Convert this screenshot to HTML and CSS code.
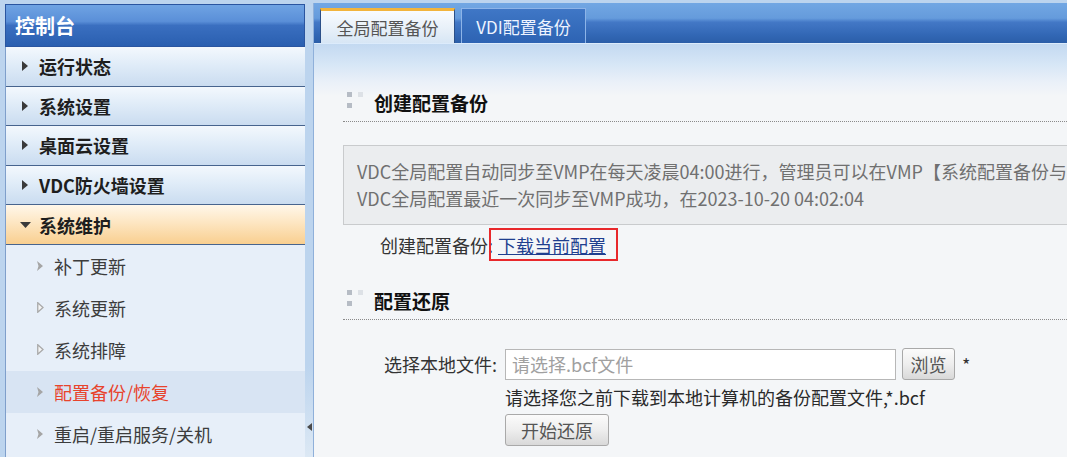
FILE: index.html
```html
<!DOCTYPE html>
<html lang="zh-CN">
<head>
<meta charset="utf-8">
<title>配置备份/恢复</title>
<link rel="stylesheet" href="styles.css">
</head>
<body>
<div class="app">
  <aside class="sidebar">
    <div class="side-title">控制台</div>
    <div class="menu-item"><span class="ico"><svg width="6" height="10" viewBox="0 0 6 10"><path d="M0 0 L6 5 L0 10 Z" fill="#3a3a3a"/></svg></span><span>运行状态</span></div>
    <div class="menu-item"><span class="ico"><svg width="6" height="10" viewBox="0 0 6 10"><path d="M0 0 L6 5 L0 10 Z" fill="#3a3a3a"/></svg></span><span>系统设置</span></div>
    <div class="menu-item"><span class="ico"><svg width="6" height="10" viewBox="0 0 6 10"><path d="M0 0 L6 5 L0 10 Z" fill="#3a3a3a"/></svg></span><span>桌面云设置</span></div>
    <div class="menu-item"><span class="ico"><svg width="6" height="10" viewBox="0 0 6 10"><path d="M0 0 L6 5 L0 10 Z" fill="#3a3a3a"/></svg></span><span>VDC防火墙设置</span></div>
    <div class="menu-item active"><span class="ico"><svg width="11" height="6" viewBox="0 0 11 6"><path d="M0 0 L11 0 L5.5 6 Z" fill="#3a3a3a"/></svg></span><span>系统维护</span></div>
    <ul class="submenu">
      <li><span class="ico"><svg width="6" height="10" viewBox="0 0 6 10"><path d="M0 0 L6 5 L0 10 L1.5 5 Z" fill="#a5a5a5"/></svg></span><span>补丁更新</span></li>
      <li><span class="ico"><svg width="7" height="11" viewBox="0 0 7 11"><path d="M0.75 0.75 L6 5.5 L0.75 10.25 Z" fill="#f4f4f4" stroke="#a9a9a9" stroke-width="1.3"/></svg></span><span>系统更新</span></li>
      <li><span class="ico"><svg width="7" height="11" viewBox="0 0 7 11"><path d="M0.75 0.75 L6 5.5 L0.75 10.25 Z" fill="#f4f4f4" stroke="#a9a9a9" stroke-width="1.3"/></svg></span><span>系统排障</span></li>
      <li class="current"><span class="ico"><svg width="6" height="10" viewBox="0 0 6 10"><path d="M0 0 L6 5 L0 10 L1.5 5 Z" fill="#a5a5a5"/></svg></span><span>配置备份/恢复</span></li>
      <li><span class="ico"><svg width="6" height="10" viewBox="0 0 6 10"><path d="M0 0 L6 5 L0 10 L1.5 5 Z" fill="#a5a5a5"/></svg></span><span>重启/重启服务/关机</span></li>
    </ul>
  </aside>
  <div class="splitter"><svg class="split-arrow" width="5" height="8" viewBox="0 0 5 8"><path d="M5 0 L0 4 L5 8 Z" fill="#4a4a4a"/></svg></div>
  <main class="content">
    <div class="tabbar">
      <div class="tab active">全局配置备份</div>
      <div class="tab">VDI配置备份</div>
    </div>
    <div class="panel">
      <div class="section-head first">
        <span class="dots"><i class="d1"></i><i class="d2"></i><i class="d1"></i><i class="d4"></i></span>
        <h2>创建配置备份</h2>
      </div>
      <div class="notice">
        <p>VDC全局配置自动同步至VMP在每天凌晨04:00进行，管理员可以在VMP【系统配置备份与恢复】中恢复</p>
        <p>VDC全局配置最近一次同步至VMP成功，在2023-10-20 04:02:04</p>
      </div>
      <div class="backup-row">
        <span class="label">创建配置备份:</span><span class="highlight"><a href="#" class="link">下载当前配置</a></span>
      </div>
      <div class="section-head">
        <span class="dots"><i class="d1"></i><i class="d2"></i><i class="d1"></i><i class="d4"></i></span>
        <h2>配置还原</h2>
      </div>
      <div class="form-row">
        <span class="form-label">选择本地文件:</span>
        <input class="file-input" type="text" placeholder="请选择.bcf文件">
        <button class="btn browse">浏览</button>
        <span class="star">*</span>
      </div>
      <div class="hint">请选择您之前下载到本地计算机的备份配置文件,*.bcf</div>
      <button class="btn restore">开始还原</button>
    </div>
  </main>
</div>
</body>
</html>
```
FILE: styles.css
```css
* { box-sizing: border-box; }
html, body { margin: 0; padding: 0; }
body {
  background: #bcd4ee;
  font-family: "Noto Sans CJK SC", "Noto Sans", sans-serif;
  width: 1067px;
  height: 457px;
  overflow: hidden;
}
.app {
  display: flex;
  height: 457px;
  padding-top: 3px;
}
.sidebar {
  width: 300px;
  margin-left: 5px;
  margin-top: 1px;
  background: #e6eef9;
  border-left: 1px solid #7f9fcb;
  display: flex;
  flex-direction: column;
}
.side-title {
  height: 43px;
  border: 1px solid #2a55a0;
  margin-left: -1px;
  background: linear-gradient(#6fa3e3 0%, #5a8fd8 40%, #3a6fc0 50%, #2a5fb0 100%);
  color: #fff;
  font-size: 20px;
  font-weight: bold;
  padding-left: 9px;
  display: flex;
  align-items: center;
}
.menu-item {
  height: 39.6px;
  border-bottom: 1px solid #47648e;
  background: linear-gradient(#f3f8fd 0%, #e0ecf8 45%, #cadcf0 100%);
  display: flex;
  align-items: center;
  padding-left: 11px;
  font-size: 18px;
  font-weight: bold;
  color: #1e1e1e;
}
.menu-item.active {
  background: linear-gradient(#fff7ea 0%, #fde6c2 45%, #f9cf90 100%);
}
.ico {
  width: 16px;
  display: flex;
  justify-content: center;
  align-items: center;
  margin-right: 6px;
}
.submenu {
  list-style: none;
  margin: 0;
  padding: 0;
  background: #e7eff9;
  flex: 1;
}
.submenu li {
  height: 42px;
  display: flex;
  align-items: center;
  padding-left: 26px;
  font-size: 18px;
  color: #3c3c3c;
}
.submenu li.current {
  background: #d8e4f3;
  color: #e8432c;
}
.splitter {
  width: 8px;
  background: linear-gradient(#bcd4ee 0%, #bcd4ee 80%, #dce8f4 100%);
  display: flex;
  flex-direction: column;
  justify-content: flex-end;
  align-items: center;
  padding-bottom: 26px;
}
.content {
  flex: 1;
  min-width: 0;
  border-left: 1px solid #8fb0da;
  overflow: hidden;
  display: flex;
  flex-direction: column;
}
.tabbar {
  height: 41px;
  flex: none;
  background: linear-gradient(#72a7e3 0%, #659bdc 38%, #4378c6 48%, #3267b5 80%, #2b5ea8 100%);
  border-bottom: 1px solid #dcebfb;
  padding-left: 6px;
  display: flex;
  align-items: flex-end;
  gap: 6px;
}
.tab {
  height: 35px;
  display: flex;
  align-items: center;
  justify-content: center;
  font-size: 17px;
}
.tab.active {
  width: 135px;
  border: 1px solid #2b4f88;
  border-top: 3px solid #f2b43c;
  border-bottom: none;
  background: linear-gradient(#f8fbfe 0%, #e6eff8 60%, #d7e6f5 100%);
  color: #555;
}
.tab:not(.active) {
  width: 125px;
  border: 1px solid #8db4e8;
  border-bottom: none;
  background: linear-gradient(#3f77c6, #2d63b3);
  color: #eef4ff;
}
.panel {
  flex: 1;
  background: linear-gradient(#c3d9f1 0px, #d6e6f6 20px, #eaf0f8 38px, #f4f6f8 52px, #f4f6f8 100%);
  padding-left: 29px;
}
.section-head {
  height: 38px;
  display: flex;
  align-items: center;
  padding-left: 4px;
  border-bottom: 1px dotted #8a8a8a;
  margin-top: 21px;
}
.section-head.first { margin-top: 40px; }
.dots {
  display: grid;
  grid-template-columns: 5px 5px;
  grid-template-rows: 5px 5px;
  gap: 6px;
  margin-top: -6px;
  margin-right: 11px;
}
.dots i { display: block; }
.dots .d1 { background: #b6bcc5; }
.dots .d2 { background: #dde1e6; }
.dots .d4 { background: transparent; }
.section-head h2 {
  margin: 0;
  font-size: 19px;
  font-weight: bold;
  color: #111;
}
.notice {
  margin-top: 23px;
  height: 80px;
  background: #ebedef;
  border: 1px solid #c9cbcd;
  border-right: none;
  padding: 12px 0 0 13px;
  font-size: 18px;
  line-height: 27px;
  color: #707070;
  white-space: nowrap;
}
.notice p { margin: 0; }
.backup-row {
  margin-top: 3px;
  height: 33px;
  display: flex;
  align-items: center;
  padding-left: 37px;
  font-size: 18px;
  color: #333;
}
.highlight {
  height: 33px;
  border: 2px solid #e8282b;
  display: flex;
  align-items: center;
  padding: 0 10px 0 7px;
  margin-left: -4px;
}
.link {
  color: #1f3f8f;
  text-decoration: underline;
}
.form-row {
  margin-top: 28px;
  display: flex;
  align-items: center;
  height: 32px;
  font-size: 18px;
  color: #333;
}
.form-label {
  width: 162px;
  text-align: right;
  padding-right: 8px;
}
.file-input {
  width: 391px;
  height: 31px;
  border: 1px solid #b7b7b7;
  background: #fff;
  font-family: inherit;
  font-size: 18px;
  padding: 0 6px;
  outline: none;
}
.file-input::placeholder { color: #a0a0a0; }
.btn {
  height: 32px;
  border: 1px solid #a9a9a9;
  border-radius: 3px;
  background: linear-gradient(#fbfbfb 0%, #eeeeee 50%, #d9d9d9 100%);
  font-family: inherit;
  font-size: 18px;
  color: #555;
  padding: 0;
}
.browse {
  width: 53px;
  margin-left: 6px;
}
.star {
  margin-left: 7px;
  color: #333;
}
.hint {
  margin-left: 162px;
  margin-top: 4px;
  line-height: 26px;
  font-size: 18px;
  color: #2a2a2a;
}
.restore {
  display: block;
  width: 104px;
  margin-left: 162px;
  margin-top: 4px;
}
```
